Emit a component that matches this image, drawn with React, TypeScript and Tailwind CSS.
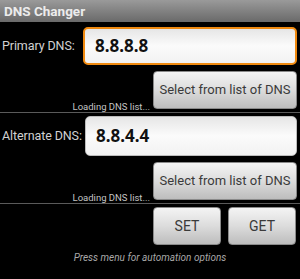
import React from 'react';

// Android-style gray button
function GrayButton({ label, className = '' }: { label: string; className?: string }) {
  return (
    <div
      className={`flex items-center justify-center whitespace-nowrap rounded-[4px] border border-[#8a8a8a] bg-gradient-to-b from-[#f4f4f4] via-[#dcdcdc] to-[#bdbdbd] text-[#3a3a3a] ${className}`}
    >
      {label}
    </div>
  );
}

function DnsSection({
  label,
  value,
  focused,
  fieldClass,
  labelWidth,
}: {
  label: string;
  value: string;
  focused?: boolean;
  fieldClass: string;
  labelWidth: string;
}) {
  return (
    <div className="border-b border-[#5a5a5a] pb-[3px]">
      <div className={`flex items-center pr-[3px] ${fieldClass}`}>
        <div className={`${labelWidth} shrink-0 whitespace-nowrap pl-[2px] text-[12.5px] tracking-[-0.1px] text-[#d2d2d2]`}>
          {label}
        </div>
        <div
          className={`flex flex-1 items-center rounded-[5px] bg-gradient-to-b from-[#e6e6e6] via-[#fbfbfb] to-[#f2f2f2] pl-[10px] text-[17px] font-bold text-[#111] ${
            focused ? 'h-[38px] border-2 border-[#f08a10]' : 'h-[40px] border border-[#bcbcbc]'
          }`}
          style={{ fontFamily: '"Noto Sans", sans-serif' }}
        >
          {value}
        </div>
      </div>
      <div className="flex items-end justify-end gap-[3px] pr-[3px] pt-[6px]">
        <div className="mb-[-3px] whitespace-nowrap text-[9.5px] leading-[10px] text-[#c4c4c4]">Loading DNS list...</div>
        <GrayButton label="Select from list of DNS" className="h-[38px] w-[144px] text-[13px]" />
      </div>
    </div>
  );
}

export default function App() {
  return (
    <div
      className="flex h-[279px] w-[300px] flex-col overflow-hidden bg-black"
      style={{ fontFamily: 'Roboto, "Noto Sans", sans-serif' }}
    >
      <div className="flex h-[22px] shrink-0 items-center bg-gradient-to-b from-[#9a9a9a] to-[#6a6a6a] pl-[4px] text-[13.5px] font-bold text-[#ececec]">
        DNS Changer
      </div>
      <DnsSection label="Primary DNS:" value="8.8.8.8" focused fieldClass="pt-[5px]" labelWidth="w-[83px]" />
      <DnsSection label="Alternate DNS:" value="8.8.4.4" fieldClass="pt-[3px]" labelWidth="w-[85px]" />
      <div className="flex justify-end gap-[7px] pr-[4px] pt-[3px]">
        <GrayButton label="SET" className="h-[38px] w-[68px] text-[14px]" />
        <GrayButton label="GET" className="h-[38px] w-[68px] text-[14px]" />
      </div>
      <div className="pt-[5px] text-center text-[10px] italic text-[#a8a8a8]">Press menu for automation options</div>
    </div>
  );
}
